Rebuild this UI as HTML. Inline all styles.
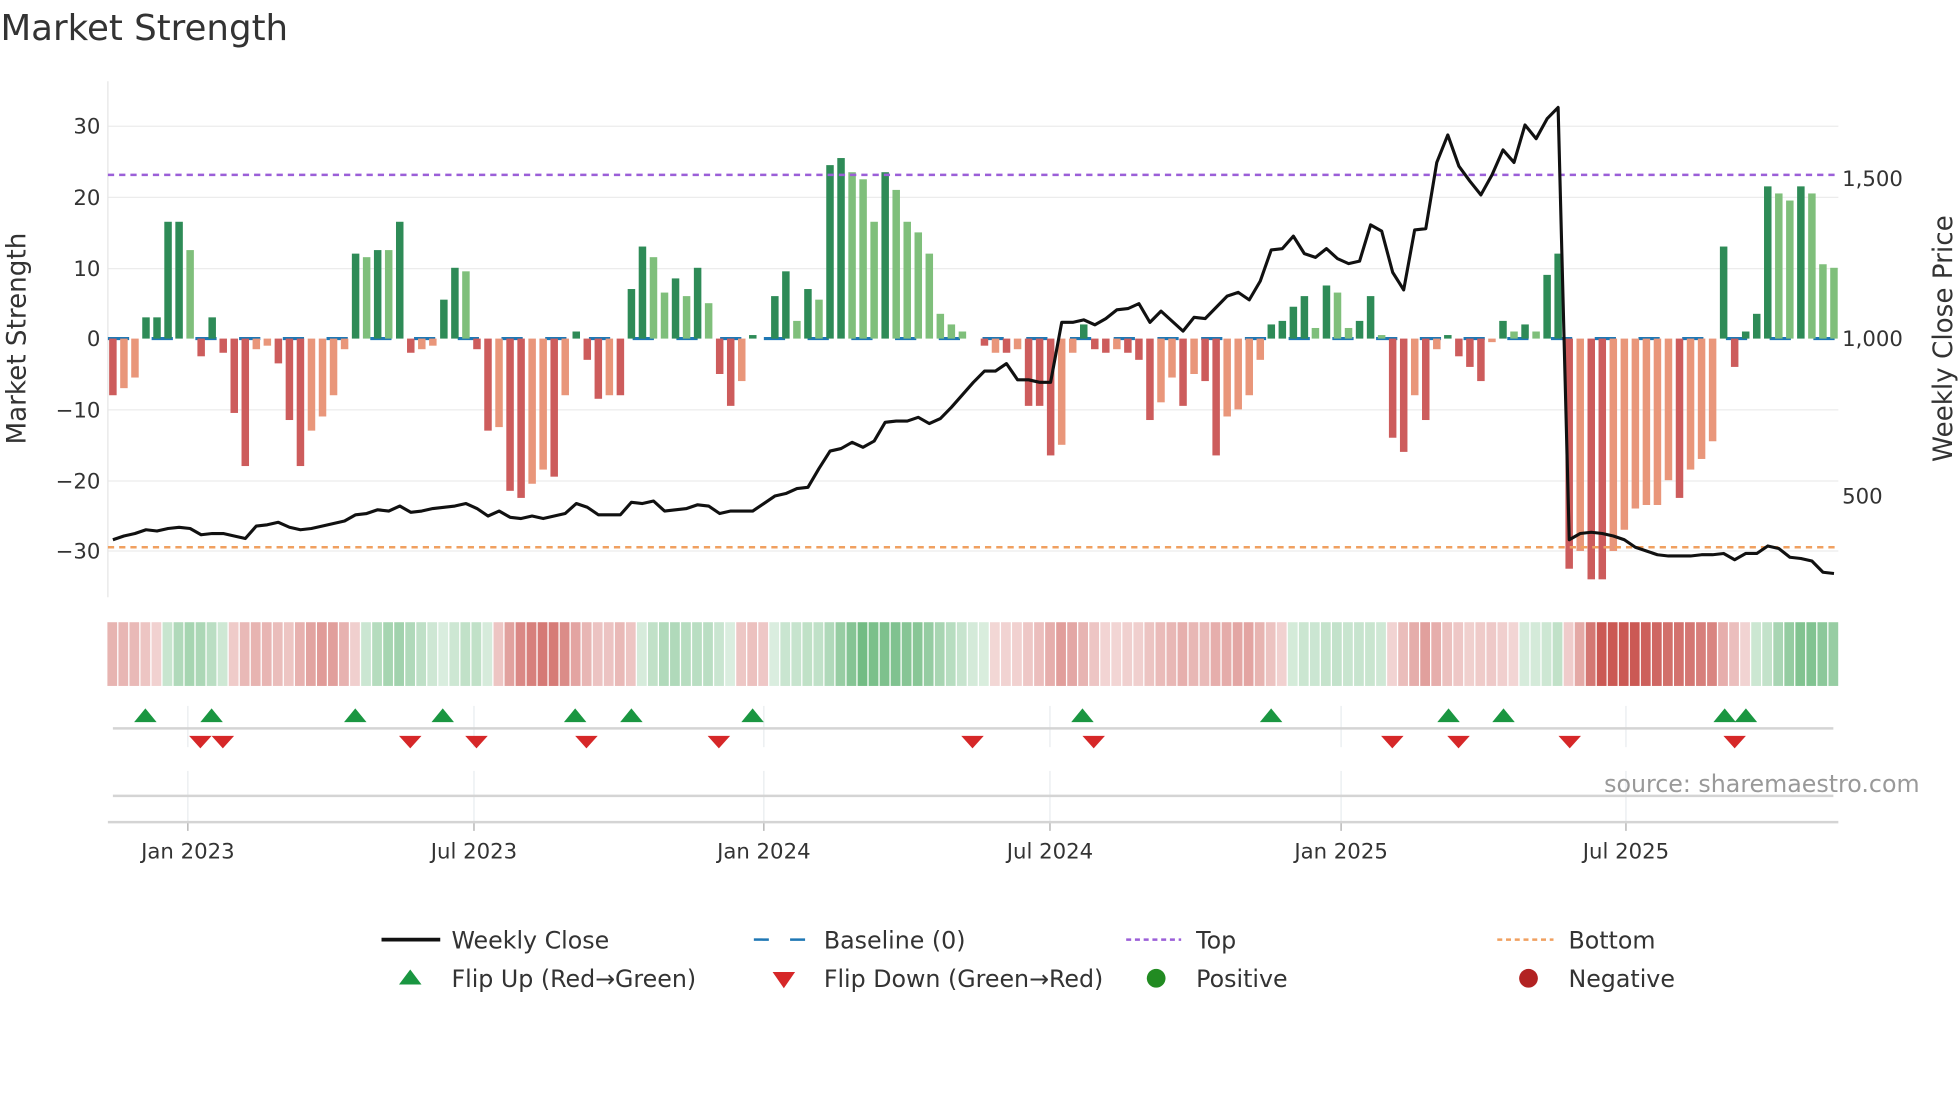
<!DOCTYPE html>
<html><head><meta charset="utf-8"><style>
html,body{margin:0;padding:0;background:#fff;width:1960px;height:1102px;overflow:hidden}
svg{display:block}
text{font-family:"DejaVu Sans","Liberation Sans",sans-serif;fill:#333}
</style></head><body>
<svg id="s" width="1960" height="1102" viewBox="0 0 1568 882" xmlns="http://www.w3.org/2000/svg">
<text x="0" y="32" font-size="28.5">Market Strength</text>
<g stroke="#ececec" stroke-width="1">
<line x1="86" x2="1471" y1="101" y2="101"/><line x1="86" x2="1471" y1="158" y2="158"/>
<line x1="86" x2="1471" y1="215" y2="215"/><line x1="86" x2="1471" y1="328" y2="328"/>
<line x1="86" x2="1471" y1="385" y2="385"/><line x1="86" x2="1471" y1="441" y2="441"/>
</g>
<line x1="86" x2="86" y1="65" y2="478" stroke="#e6e6e6"/>
<g font-size="17" text-anchor="end">
<text x="80" y="107">30</text><text x="80" y="164">20</text><text x="80" y="221">10</text>
<text x="80" y="277">0</text><text x="80" y="334">−10</text><text x="80" y="391">−20</text><text x="80" y="447">−30</text>
</g>
<g font-size="17">
<text x="1474" y="149">1,500</text><text x="1474" y="277">1,000</text><text x="1474" y="403">500</text>
</g>
<text transform="translate(20,271) rotate(-90)" font-size="21" text-anchor="middle">Market Strength</text>
<text transform="translate(1562,271) rotate(-90)" font-size="21" text-anchor="middle">Weekly Close Price</text>
<line x1="86" x2="1471" y1="271" y2="271" stroke="#1f77b4" stroke-width="2.5" stroke-dasharray="17 18"/>
<g id="bars"></g>
<line x1="86" x2="1471" y1="140" y2="140" stroke="#9b5fd8" stroke-width="2" stroke-dasharray="5 4"/>
<line x1="86" x2="1471" y1="438" y2="438" stroke="#f0a060" stroke-width="2" stroke-dasharray="5 4"/>
<polyline id="price" fill="none" stroke="#111" stroke-width="2.5" stroke-linejoin="round"/>
<g id="strip"></g>
<g id="vgrid" stroke="#e8ecef" stroke-width="1"></g>
<line x1="90" x2="1467" y1="583" y2="583" stroke="#d4d4d4" stroke-width="2"/>
<line x1="90" x2="1467" y1="637" y2="637" stroke="#d4d4d4" stroke-width="2"/>
<line x1="86" x2="1471" y1="658" y2="658" stroke="#d4d4d4" stroke-width="2"/>
<g id="marks"></g>
<text x="1536" y="634" font-size="19" text-anchor="end" style="fill:#999">source: sharemaestro.com</text>
<g font-size="17" text-anchor="middle">
<text x="150" y="687">Jan 2023</text><text x="379" y="687">Jul 2023</text><text x="611" y="687">Jan 2024</text>
<text x="840" y="687">Jul 2024</text><text x="1073" y="687">Jan 2025</text><text x="1301" y="687">Jul 2025</text>
</g>
<g font-size="19">
<line x1="305" x2="352" y1="752" y2="752" stroke="#111" stroke-width="3"/><text x="361" y="759">Weekly Close</text>
<line x1="603" x2="646" y1="752" y2="752" stroke="#1f77b4" stroke-width="2" stroke-dasharray="12 17"/><text x="659" y="759">Baseline (0)</text>
<line x1="901" x2="945" y1="752" y2="752" stroke="#9b5fd8" stroke-width="2" stroke-dasharray="4 3"/><text x="957" y="759">Top</text>
<line x1="1198" x2="1243" y1="752" y2="752" stroke="#f0a060" stroke-width="2" stroke-dasharray="4 3"/><text x="1255" y="759">Bottom</text>
<polygon points="319,788 328,776 337,788" fill="#1a9641"/><text x="361" y="790">Flip Up (Red→Green)</text>
<polygon points="618,778 636,778 627,791" fill="#d62728"/><text x="659" y="790">Flip Down (Green→Red)</text>
<circle cx="925" cy="783" r="7.5" fill="#228b22"/><text x="957" y="790">Positive</text>
<circle cx="1223" cy="783" r="7.5" fill="#b22222"/><text x="1255" y="790">Negative</text>
</g>
</svg>
<script>
var B="-8d -7l -5.5l 3d 3d 16.5d 16.5d 12.5l -2.5d 3d -2d -10.5d -18d -1.5l -1l -3.5d -11.5d -18d -13l -11l -8l -1.5l 12d 11.5l 12.5d 12.5l 16.5d -2d -1.5l -1l 5.5d 10d 9.5l -1.5d -13d -12.5l -21.5d -22.5d -20.5l -18.5l -19.5d -8l 1d -3d -8.5d -8l -8d 7d 13d 11.5l 6.5l 8.5d 6l 10d 5l -5d -9.5d -6l 0.5d 0d 6d 9.5d 2.5l 7d 5.5l 24.5d 25.5d 23.5l 22.5l 16.5l 23.5d 21l 16.5l 15l 12l 3.5l 2l 1l 0d -1d -2l -2d -1.5l -9.5d -9.5d -16.5d -15l -2l 2d -1.5d -2d -1.5l -2d -3d -11.5d -9l -5.5l -9.5d -5l -6d -16.5d -11l -10l -8l -3l 2d 2.5d 4.5d 6d 1.5l 7.5d 6.5l 1.5l 2.5d 6d 0.5l -14d -16d -8l -11.5d -1.5l 0.5d -2.5d -4d -6d -0.5l 2.5d 1l 2d 1l 9d 12d -32.5d -30l -34d -34d -30l -27l -24l -23.5l -23.5l -20l -22.5d -18.5l -17l -14.5l 13d -4d 1d 3.5d 21.5d 20.5l 19.5l 21.5d 20.5l 10.5l 10l".split(" ");
var P=[432,429,427,424,425,423,422,423,428,427,427,429,431,421,420,418,422,424,423,421,419,417,412,411,408,409,405,410,409,407,406,405,403,407,413,409,414,415,413,415,413,411,403,406,412,412,412,402,403,401,409,408,407,404,405,411,409,409,409,403,397,395,391,390,375,361,359,354,358,353,338,337,337,334,339,335,326,316,306,297,297,291,304,304,306,306,258,258,256,260,255,248,247,243,258,249,257,265,254,255,246,237,234,240,225,200,199,189,203,206,199,207,211,209,180,185,218,232,184,183,130,108,133,145,156,140,120,130,100,111,95,86,432,427,426,427,429,432,438,441,444,445,445,445,444,444,443,448,443,443,437,439,446,447,449,458,459];
var ns="http://www.w3.org/2000/svg",st=8.83,x0=90;
function el(t,a,p){var e=document.createElementNS(ns,t);for(var k in a)e.setAttribute(k,a[k]);p.appendChild(e);return e;}
var gb=document.getElementById("bars"),gs=document.getElementById("strip");
var vals=B.map(function(s){return parseFloat(s)});
for(var i=0;i<B.length;i++){var v=vals[i],d=B[i].slice(-1)=="d",x=x0+i*st;
 if(v!=0){var y=271-v*5.667;var c=v>0?(d?"#2e8b57":"#7fbf7b"):(d?"#cd5c5c":"#e9967a");
 el("rect",{x:x-3,y:Math.min(y,271),width:6,height:Math.abs(271-y),fill:c},gb);}
 var s=0,n=0;for(var j=Math.max(0,i-3);j<=i;j++){s+=vals[j];n++;}s/=n;
 var a=Math.min(0.95,0.22+Math.abs(s)/38);
 var col=s>=0?"rgba(90,176,110,"+a+")":"rgba(200,80,75,"+a+")";
 el("rect",{x:x-4.4,y:498,width:7.8,height:51,fill:col},gs);}
var pts=P.map(function(y,i){return (x0+i*st).toFixed(1)+","+y}).join(" ");
document.getElementById("price").setAttribute("points",pts);
var vg=document.getElementById("vgrid");
[150,379,611,840,1073,1301].forEach(function(x){el("line",{x1:x,x2:x,y1:565,y2:598},vg);el("line",{x1:x,x2:x,y1:617,y2:658},vg);el("line",{x1:x,x2:x,y1:658,y2:665,stroke:"#aaa"},vg);});
var gm=document.getElementById("marks");
[116,169,284,354,460,505,602,866,1017,1159,1203,1380,1397].forEach(function(x){el("polygon",{points:(x-9)+",578 "+x+",567 "+(x+9)+",578",fill:"#1a9641"},gm);});
[160,178,328,381,469,575,778,875,1114,1167,1256,1388].forEach(function(x){el("polygon",{points:(x-9)+",589 "+(x+9)+",589 "+x+",599",fill:"#d62728"},gm);});
</script>
</body></html>
